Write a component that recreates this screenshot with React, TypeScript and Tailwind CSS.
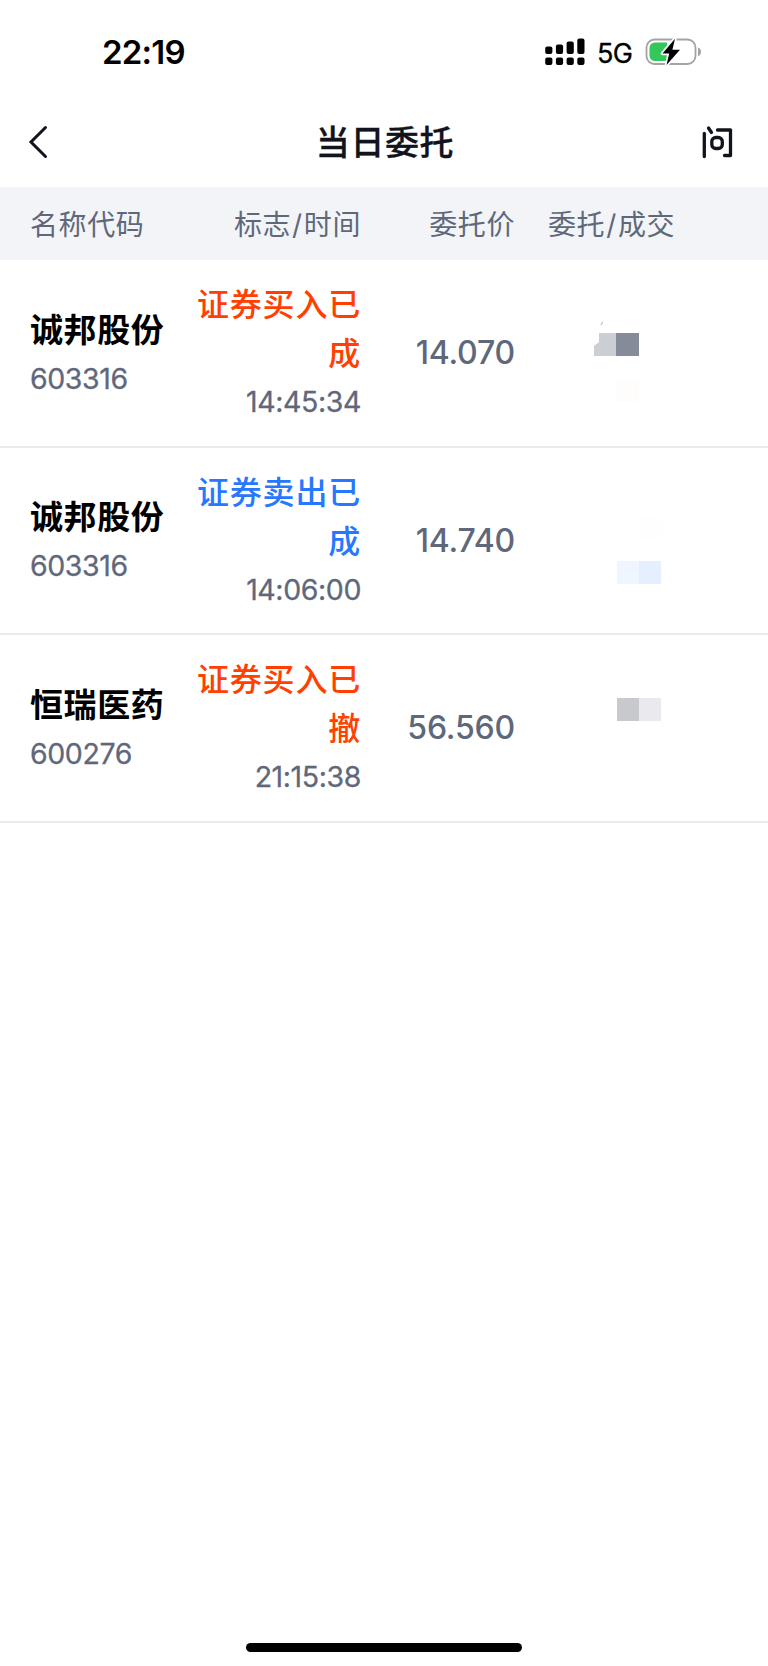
type Order = {
  name: string;
  code: string;
  flag: string;
  time: string;
  price: string;
  side: 'buy' | 'sell';
  mosaic: React.ReactNode;
};

// Amounts are masked, each order only shows its mosaic tiles
const orders: Order[] = [
  {
    name: '诚邦股份',
    code: '603316',
    flag: '证券买入已成',
    time: '14:45:34',
    price: '14.070',
    side: 'buy',
    mosaic: (
      <div className="pt-[61px] pl-[79px]">
        <svg className="block ml-[6px]" width="4" height="6" viewBox="0 0 4 6">
          <path d="M2.7 0.8 1 4.3" stroke="#a5a8ae" strokeWidth="0.9" fill="none" />
        </svg>
        <div className="flex mt-[6px]">
          <div className="w-[22px] h-[23px] bg-[#cbced3] [clip-path:polygon(5px_0,100%_0,100%_100%,0_100%,0_13px,5px_9px)]" />
          <div className="w-[23px] h-[23px] bg-[#858b99]" />
        </div>
        <div className="w-[23px] h-[23px] mt-[23px] ml-[22px] bg-[#fffcfc]" />
      </div>
    ),
  },
  {
    name: '诚邦股份',
    code: '603316',
    flag: '证券卖出已成',
    time: '14:06:00',
    price: '14.740',
    side: 'sell',
    mosaic: (
      <div className="pt-[69px] pl-[102px]">
        <div className="w-[23px] h-[22px] ml-[23px] bg-[#fefefe]" />
        <div className="flex mt-[22px]">
          <div className="w-[22px] h-[23px] bg-[#f0f6ff]" />
          <div className="w-[22px] h-[23px] bg-[#e4efff]" />
        </div>
      </div>
    ),
  },
  {
    name: '恒瑞医药',
    code: '600276',
    flag: '证券买入已撤',
    time: '21:15:38',
    price: '56.560',
    side: 'buy',
    mosaic: (
      <div className="pt-[62.500px] pl-[102px]">
        <div className="flex">
          <div className="w-[22px] h-[23px] bg-[#c8c9cd]" />
          <div className="w-[22px] h-[23px] bg-[#e9e9ee]" />
        </div>
      </div>
    ),
  },
];

const signalBars = [
  { x: 0, y: 8.5, h: 7.5 },
  { x: 10.7, y: 6.5, h: 9.5 },
  { x: 21.4, y: 3.5, h: 12.5 },
  { x: 32.1, y: 0.5, h: 15.5 },
];

const StatusBar = () => (
  <div className="flex items-center justify-between h-[104px] pl-[102px] pr-[66px] text-black">
    <div className="text-[33px] leading-[40px] font-semibold tracking-[-0.800px]">22:19</div>
    <div className="flex items-center">
      <svg width="40" height="28" viewBox="0 0 40 28">
        {signalBars.map((bar) => (
          <g key={bar.x}>
            <rect x={bar.x + 0.2} y={bar.y} width="7.200" height={bar.h} rx="2" />
            <rect x={bar.x + 0.2} y="19.500" width="7.200" height="7.500" rx="2" />
          </g>
        ))}
      </svg>
      <div className="ml-[12px] pt-[3px] text-[27px] leading-[34px] tracking-[-0.800px] [-webkit-text-stroke:0.300px_#000]">5G</div>
      <svg className="ml-[13px]" width="57" height="28" viewBox="0 0 57 28">
        <rect x="1.500" y="1.500" width="49" height="24.500" rx="8" fill="none" stroke="#a3a3a5" strokeWidth="1.800" />
        <path d="M53 9.500c2 .6 3 2.200 3 4.300s-1 3.700-3 4.300z" fill="#a3a3a5" />
        <path d="M10 4.500h12V23H10a5.500 5.500 0 0 1-5.500-5.500V10A5.500 5.500 0 0 1 10 4.500Z" fill="#34c759" />
        <path
          d="M30 0.800 17.500 15.500h6.700L21.500 27 35 11.800h-7.600Z"
          fill="#000"
          stroke="#fff"
          strokeWidth="3.500"
          strokeLinejoin="round"
          paintOrder="stroke"
        />
      </svg>
    </div>
  </div>
);

const NavBar = () => (
  <div className="grid grid-cols-[60px_1fr_60px] items-center h-[83px] pl-[28px] pr-[34px] pb-[8px] text-[#11141c]">
    <svg width="20" height="34" viewBox="0 0 20 34">
      <path d="M17.500 2.500 3 17l14.500 14.500" fill="none" stroke="currentColor" strokeWidth="3" strokeLinecap="round" />
    </svg>
    <h1 className="pl-[8px] pt-[2px] text-center text-[34px] leading-[44px] font-medium tracking-[0.600px] whitespace-nowrap [-webkit-text-stroke:0.300px_#11141c]">
      当日委托
    </h1>
    <svg className="justify-self-end" width="32" height="34" viewBox="0 0 32 34">
      <g fill="none" stroke="currentColor" strokeWidth="3.300" strokeLinecap="round" strokeLinejoin="round">
        <path d="M2.300 8.500V31.500M6.500 3l3 4.500M15.500 5h13v25.500h-6" />
        <rect x="9.800" y="12.500" width="10.500" height="11" rx="4" />
      </g>
    </svg>
  </div>
);

const OrderRow = ({ order }: { order: Order }) => (
  <div className="grid grid-cols-[164px_167px_154px_1fr] h-[187.500px] pl-[30px] border-b-2 border-[#e8ebf0]">
    <div className="self-center pt-[2px]">
      <div className="text-[33px] leading-[50px] font-bold tracking-[0.600px] text-black">{order.name}</div>
      <div className="text-[28.500px] leading-[48px] tracking-[-0.400px] [-webkit-text-stroke:0.300px_#5f687b]">{order.code}</div>
    </div>
    <div className="self-center text-right pt-px">
      <div
        className={`text-[32px] leading-[49px] font-medium tracking-[0.800px] ${
          order.side === 'buy' ? 'text-[#ff4000]' : 'text-[#2878ff]'
        }`}
      >
        {order.flag}
      </div>
      <div className="text-[28.500px] leading-[48px] tracking-[-0.400px] [-webkit-text-stroke:0.300px_#5f687b]">{order.time}</div>
    </div>
    <div className="self-center text-right pt-px text-[32px] leading-[48px] font-medium tracking-[-0.200px]">{order.price}</div>
    {order.mosaic}
  </div>
);

export default function App() {
  return (
    <div className="flex flex-col w-[768px] h-[1666px] bg-white overflow-hidden text-[#5f687b] font-[Inter,'Noto_Sans_CJK_SC',sans-serif]">
      <StatusBar />
      <NavBar />

      {/* Column titles */}
      <div className="grid grid-cols-[164px_167px_154px_1fr] items-center h-[73px] shrink-0 pl-[30px] pt-[3px] bg-[#f2f4f8] text-[28px] leading-[40px] tracking-[0.600px]">
        <div>名称代码</div>
        <div className="text-right">标志<span className="px-px">/</span>时间</div>
        <div className="text-right">委托价</div>
        <div className="pl-[33px]">委托<span className="px-px">/</span>成交</div>
      </div>

      {/* Orders */}
      <div>
        {orders.map((order) => (
          <OrderRow key={order.time} order={order} />
        ))}
      </div>

      {/* Home indicator */}
      <div className="mt-auto mb-[14px] self-center w-[276px] h-[9px] rounded-full bg-black" />
    </div>
  );
}
